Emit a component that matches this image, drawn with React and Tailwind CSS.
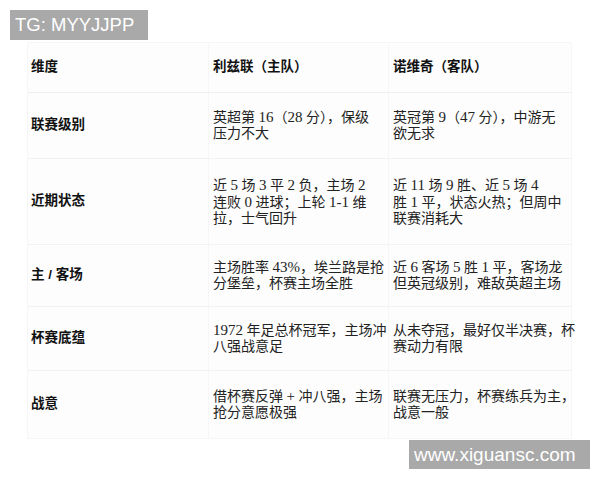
const rows = [
  {
    label: '联赛级别',
    h: 'h-[66px]',
    home: ['英超第 16（28 分），保级', '压力不大'],
    away: ['英冠第 9（47 分），中游无', '欲无求'],
  },
  {
    label: '近期状态',
    h: 'h-[86px]',
    home: ['近 5 场 3 平 2 负，主场 2', '连败 0 进球；上轮 1-1 维', '拉，士气回升'],
    away: ['近 11 场 9 胜、近 5 场 4', '胜 1 平，状态火热；但周中', '联赛消耗大'],
  },
  {
    label: '主 / 客场',
    h: 'h-[62px]',
    home: ['主场胜率 43%，埃兰路是抢', '分堡垒，杯赛主场全胜'],
    away: ['近 6 客场 5 胜 1 平，客场龙', '但英冠级别，难敌英超主场'],
  },
  {
    label: '杯赛底蕴',
    h: 'h-[64px]',
    home: ['1972 年足总杯冠军，主场冲', '八强战意足'],
    away: ['从未夺冠，最好仅半决赛，杯', '赛动力有限'],
  },
  {
    label: '战意',
    h: 'h-[67px]',
    home: ['借杯赛反弹 + 冲八强，主场', '抢分意愿极强'],
    away: ['联赛无压力，杯赛练兵为主，', '战意一般'],
  },
];

const bodyFont = "font-['Liberation_Serif','Noto_Sans_CJK_SC',serif]";
const headFont = "font-['Liberation_Sans','Noto_Sans_CJK_SC',sans-serif]";

// digits in the source render a bit larger than the CJK text around them
function Line({ text }) {
  const parts = text.split(/([0-9][0-9%\-]*|\+)/);
  return (
    <div>
      {parts.map((p, i) =>
        i % 2 === 1 ? (
          <span key={i} className="text-[15px]">{p}</span>
        ) : (
          <span key={i}>{p}</span>
        )
      )}
    </div>
  );
}

function Lines({ lines }) {
  return (
    <div className={`${bodyFont} text-[14px] leading-[16px] text-[#222] whitespace-nowrap`}>
      {lines.map((l, i) => (
        <Line key={i} text={l} />
      ))}
    </div>
  );
}

export default function App() {
  return (
    <div className="relative w-[600px] h-[480px] bg-white overflow-hidden">
      {/* watermarks */}
      <div className="absolute left-[10px] top-[10px] w-[138px] h-[30px] bg-[#a9a9a9] flex items-center pl-[5px]">
        <span className="font-['Liberation_Sans',sans-serif] text-[18.5px] text-white leading-none">TG: MYYJJPP</span>
      </div>

      <div className="pt-[42px] pl-[27px]">
        <div className="w-[545px] bg-[#fdfdfd] border border-[#f6f6f6]">
          <div className="grid grid-cols-[180px_180px_185px] h-[50px] border-b border-[#f0f0f0]">
            <div className={`${headFont} font-bold text-[13.5px] text-[#111] flex items-center pl-[3px]`}>维度</div>
            <div className={`${headFont} font-bold text-[13.5px] text-[#111] flex items-center pl-1 border-l border-[#f6f6f6]`}>利兹联（主队）</div>
            <div className={`${headFont} font-bold text-[13.5px] text-[#111] flex items-center pl-1 border-l border-[#f6f6f6]`}>诺维奇（客队）</div>
          </div>
          {rows.map((r, i) => (
            <div
              key={r.label}
              className={`grid grid-cols-[180px_180px_185px] ${r.h} ${i < rows.length - 1 ? 'border-b border-[#f2f2f2]' : ''}`}
            >
              <div className={`${headFont} font-bold text-[13.5px] text-[#111] flex items-center pl-[3px]`}>{r.label}</div>
              <div className="flex items-center pl-1 border-l border-[#f6f6f6]">
                <Lines lines={r.home} />
              </div>
              <div className="flex items-center pl-1 border-l border-[#f6f6f6]">
                <Lines lines={r.away} />
              </div>
            </div>
          ))}
        </div>
      </div>

      <div className="absolute left-[409px] top-[440px] w-[181px] h-[29px] bg-[#a9a9a9] flex items-center pl-[5px]">
        <span className="font-['Liberation_Sans',sans-serif] text-[19px] text-white leading-none">www.xiguansc.com</span>
      </div>
    </div>
  );
}
